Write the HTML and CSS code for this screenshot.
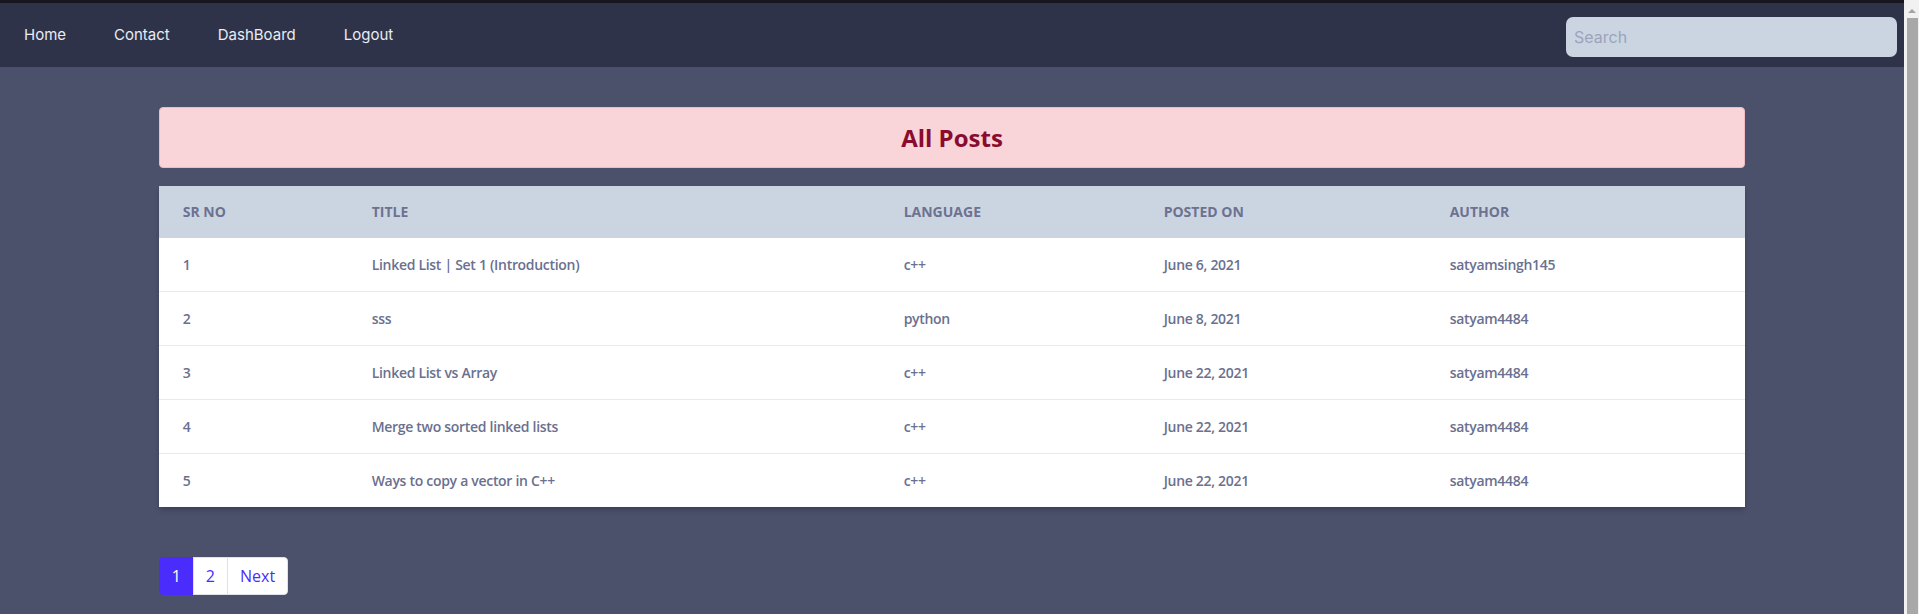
FILE: index.html
```html
<!DOCTYPE html>
<html lang="en">
<head>
<meta charset="utf-8">
<title>All Posts</title>
<link rel="stylesheet" href="styles.css">
</head>
<body>
<div class="page">
  <nav class="navbar">
    <ul class="nav-links">
      <li><a href="#">Home</a></li>
      <li><a href="#">Contact</a></li>
      <li><a href="#">DashBoard</a></li>
      <li><a href="#">Logout</a></li>
    </ul>
    <input class="search" type="text" placeholder="Search">
  </nav>
  <main class="container">
    <div class="alert">All Posts</div>
    <table class="posts">
      <thead>
        <tr>
          <th class="c-no">SR NO</th>
          <th class="c-title">TITLE</th>
          <th class="c-lang">LANGUAGE</th>
          <th class="c-date">POSTED ON</th>
          <th class="c-author">AUTHOR</th>
        </tr>
      </thead>
      <tbody>
        <tr><td>1</td><td>Linked List | Set 1 (Introduction)</td><td>c++</td><td>June 6, 2021</td><td>satyamsingh145</td></tr>
        <tr><td>2</td><td>sss</td><td>python</td><td>June 8, 2021</td><td>satyam4484</td></tr>
        <tr><td>3</td><td>Linked List vs Array</td><td>c++</td><td>June 22, 2021</td><td>satyam4484</td></tr>
        <tr><td>4</td><td>Merge two sorted linked lists</td><td>c++</td><td>June 22, 2021</td><td>satyam4484</td></tr>
        <tr><td>5</td><td>Ways to copy a vector in C++</td><td>c++</td><td>June 22, 2021</td><td>satyam4484</td></tr>
      </tbody>
    </table>
    <ul class="pagination">
      <li class="page-item active"><a href="#">1</a></li>
      <li class="page-item"><a href="#">2</a></li>
      <li class="page-item"><a href="#">Next</a></li>
    </ul>
  </main>
</div>
<div class="scrollbar" aria-hidden="true">
  <span class="scroll-arrow"></span>
  <span class="scroll-thumb"></span>
</div>
</body>
</html>
```
FILE: styles.css
```css
html, body {
  margin: 0;
  padding: 0;
}
body {
  display: flex;
  height: 100vh;
  overflow: hidden;
  background: #4b506b;
  font-family: "Open Sans", "Liberation Sans", sans-serif;
}
.page {
  flex: 1;
  min-width: 0;
  overflow: hidden;
}
.scrollbar {
  width: 15px;
  flex: none;
  background: #f1f1f1;
  display: flex;
  flex-direction: column;
  align-items: center;
}
.scroll-arrow {
  width: 0;
  height: 0;
  margin-top: 9px;
  border-left: 4px solid transparent;
  border-right: 4px solid transparent;
  border-bottom: 4px solid #a3a3a3;
}
.scroll-thumb {
  flex: 1;
  width: 11px;
  margin-top: 5px;
  margin-left: 1px;
  background: #a8a8a8;
}
.navbar {
  display: flex;
  align-items: center;
  justify-content: space-between;
  height: 64px;
  background: #2f3349;
  border-top: 3px solid #15161f;
  padding-right: 7px;
}
.nav-links {
  display: flex;
  list-style: none;
  margin: 0;
  padding: 0;
}
.nav-links a {
  display: block;
  padding: 0 24px;
  color: #e8ecf4;
  text-decoration: none;
  font-family: Inter, "Open Sans", sans-serif;
  font-size: 15px;
  line-height: 22px;
}
.search {
  width: 331px;
  height: 40px;
  box-sizing: border-box;
  margin-top: 4px;
  border: none;
  border-radius: 7px;
  background: #cbd5e1;
  padding: 0 8px;
  font-family: Inter, "Open Sans", sans-serif;
  font-size: 16px;
  color: #334155;
  outline: none;
}
.search::placeholder {
  color: #9aa4bb;
}
.container {
  width: 83.333%;
  margin: 40px auto 0;
}
.alert {
  background: #f9d4d8;
  border: 1px solid #f1b9c2;
  border-radius: 4px;
  color: #8a0b2d;
  text-align: center;
  font-weight: 700;
  font-size: 24px;
  line-height: 29px;
  padding: 15px 0;
  margin-bottom: 18px;
}
.posts {
  width: 100%;
  border-collapse: collapse;
  table-layout: fixed;
  background: #fff;
  box-shadow: 0 4px 6px -1px rgba(0,0,0,0.15), 0 2px 4px -1px rgba(0,0,0,0.1);
  font-size: 14px;
}
.posts thead tr {
  background: #cbd5e1;
}
.posts th, .posts td {
  box-sizing: border-box;
  padding: 16px 24px;
  text-align: left;
}
.posts th {
  line-height: 20px;
  color: #6c7290;
  font-weight: 700;
}
.c-no { width: 189px; }
.c-title { width: 532px; }
.c-lang { width: 260px; }
.c-date { width: 286px; }
.posts td {
  line-height: 21px;
  color: #6a7090;
  font-weight: 600;
  letter-spacing: -0.3px;
  border-bottom: 1px solid #e7e9ee;
}
.posts tbody tr:last-child td {
  border-bottom: none;
}
.pagination {
  display: flex;
  list-style: none;
  padding: 0;
  margin: 50px 0 0;
}
.page-item a {
  display: block;
  padding: 6px 12px;
  font-size: 16px;
  line-height: 24px;
  color: #4a2dfc;
  background: #fff;
  text-decoration: none;
  border: 1px solid #dee2e6;
  margin-left: -1px;
}
.page-item:first-child a {
  margin-left: 0;
  border-radius: 4px 0 0 4px;
}
.page-item:last-child a {
  border-radius: 0 4px 4px 0;
}
.page-item.active a {
  background: #4a2dfc;
  border-color: #4a2dfc;
  color: #fff;
}
```
